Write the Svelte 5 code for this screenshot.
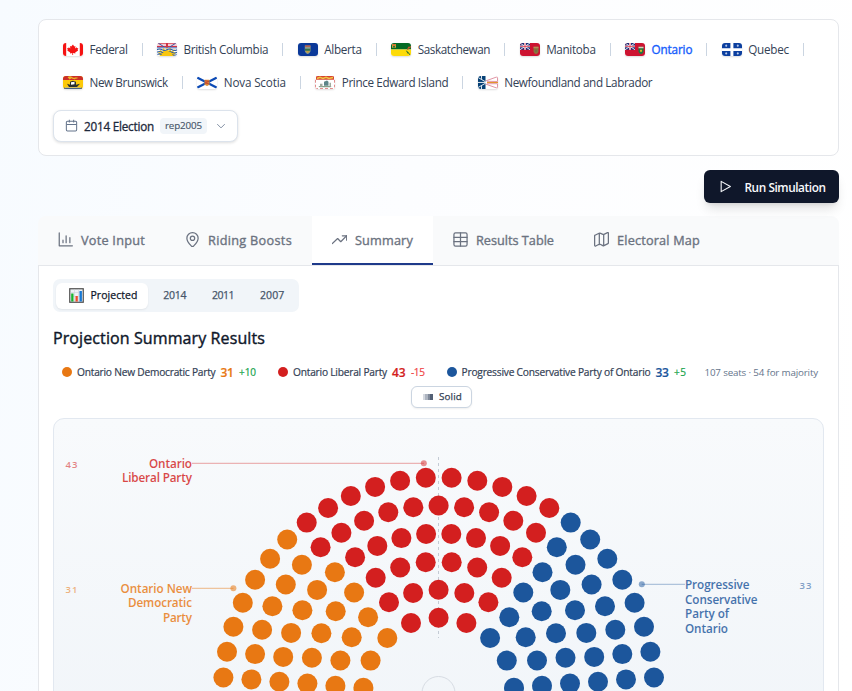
<script>
  // Spreads a label's letters so that it fills its column exactly.
  function fit(node, width) {
    const range = document.createRange();
    range.selectNodeContents(node);
    const natural = range.getBoundingClientRect().width;
    node.style.letterSpacing = `${(width - natural) / node.textContent.length}px`;
    node.style.width = `${width}px`;
  }

  const regions = [
    [
      { id: 'ca', name: 'Federal', w: 38 },
      { id: 'bc', name: 'British Columbia', w: 84.7 },
      { id: 'ab', name: 'Alberta', w: 37.5 },
      { id: 'sk', name: 'Saskatchewan', w: 72.5 },
      { id: 'mb', name: 'Manitoba', w: 49.5 },
      { id: 'on', name: 'Ontario', w: 40.7 },
      { id: 'qc', name: 'Quebec', w: 40.5 }
    ],
    [
      { id: 'nb', name: 'New Brunswick', w: 78.3 },
      { id: 'ns', name: 'Nova Scotia', w: 62 },
      { id: 'pe', name: 'Prince Edward Island', w: 106.5 },
      { id: 'nl', name: 'Newfoundland and Labrador', w: 148 }
    ]
  ];

  const tabs = [
    { id: 'vote', name: 'Vote Input', w: 64 },
    { id: 'boost', name: 'Riding Boosts', w: 84 },
    { id: 'summary', name: 'Summary', w: 58 },
    { id: 'table', name: 'Results Table', w: 78 },
    { id: 'map', name: 'Electoral Map', w: 83 }
  ];

  const parties = [
    { name: 'Ontario New Democratic Party', w: 138.5, seats: 31, sw: 13, delta: '+10', dw: 17, color: '#e87813' },
    { name: 'Ontario Liberal Party', w: 94, seats: 43, sw: 13.5, delta: '-15', dw: 13.5, color: '#d31f1f' },
    { name: 'Progressive Conservative Party of Ontario', w: 189, seats: 33, sw: 13, delta: '+5', dw: 12.5, color: '#1c569c' }
  ];

  // Left half of each arc from the axis outwards: [distance from the axis, y].
  const rows = [
    { mid: null, red: [6, 5], pts: [[12.8,477.8],[38.5,480.8],[63.5,486.9],[87.8,496],[110.5,508],[131.9,522.6],[151.4,539.5],[168.5,558.8],[183.5,579.8],[195.8,602.8],[205.2,626.8],[211.6,651.8],[215.2,677.5]] },
    { mid: 505.5, red: [5, 4], pts: [[25.3,507.2],[50.3,512.3],[74.5,520.8],[97.2,532.8],[118,547.3],[136.7,564.8],[152.8,584.5],[166.2,606.2],[176.5,629.7],[183.5,654.1],[187.2,679.4]] },
    { mid: null, red: [4, 4], pts: [[12.5,534],[37.2,538.1],[61.3,545.9],[83.5,557.2],[103.7,572.2],[121.5,589.9],[136.2,610.3],[147.5,632.9],[155.4,656.9],[159.2,681.7]] },
    { mid: null, red: [3, 3], pts: [[12.9,562.3],[38.4,567.5],[62.9,577.8],[84.5,592.5],[102.9,611.3],[117.2,633.2],[126.7,657.8],[131.2,683.6]] },
    { mid: 589.7, red: [2, 2], pts: [[25.5,593],[49.6,602.3],[70.5,617.3],[86.9,637.2],[98.2,660.5],[103.2,685.7]] },
    { mid: 617.8, red: [1, 1], pts: [[27.6,623],[51.3,638],[68,660.6],[75.2,687.8]] }
  ];
  const AXIS = 438.6;
  const RED = '#d31f1f', ORANGE = '#e87813', BLUE = '#1c569c';
  const seats = rows.flatMap((r) => [
    ...(r.mid ? [{ x: AXIS, y: r.mid, c: RED }] : []),
    ...r.pts.flatMap(([d, y], i) => [
      { x: AXIS - d, y, c: i < r.red[0] ? RED : ORANGE },
      { x: AXIS + d + 0.2, y, c: i < r.red[1] ? RED : BLUE }
    ])
  ]);

  const labels = [
    { c: RED, anchor: 'end', x: 192, y: 468, step: 14.3, lines: [['Ontario', 43], ['Liberal Party', 70]], num: 43, nx: 65.5, ny: 468 },
    { c: ORANGE, anchor: 'end', x: 192, y: 593, step: 14.4, lines: [['Ontario New', 71.5], ['Democratic', 64], ['Party', 29]], num: 31, nx: 65.5, ny: 593 },
    { c: BLUE, anchor: 'start', x: 685, y: 589, step: 14.6, lines: [['Progressive', 64.5], ['Conservative', 72.5], ['Party of', 44], ['Ontario', 43]], num: 33, nx: 799.5, ny: 589 }
  ];
</script>

{#snippet jack()}
  <path fill="#1b2f78" d="M0 0h10v7H0z" />
  <path d="M0 0l10 7M10 0L0 7" stroke="#e6e8f2" stroke-width="1" />
  <path d="M5 0v7M0 3.5h10" stroke="#fff" stroke-width="2" />
  <path d="M5 0v7M0 3.5h10" stroke="#d5213a" stroke-width=".8" />
{/snippet}

{#snippet flag(id)}
  <svg class="flag" viewBox="0 0 20 13.5" preserveAspectRatio="none" fill="none">
    {#if id === 'ca'}
      <path fill="#fff" d="M0 0h20v13.5H0z" />
      <path fill="#f51212" d="M0 0h3.2v13.5H0zM16.8 0H20v13.500h-3.200zM10 1.6l1.2 2 1.2-.5-.3 2.600 1.500-1.200.5 1 1.200-.2-.7 2 .6.500-3 2 .2 1-2.300-.3v2h-.8v-2l-2.300.3.2-1-3-2 .6-.5-.7-2 1.200.2.500-1 1.500 1.200-.3-2.600 1.200.5z" />
    {:else if id === 'bc'}
      <path fill="#fff" d="M0 0h20v13.5H0z" />
      <path fill="#cf3347" d="M0 .2h20v1.1H0zM0 2.8h20v1.3H0zM9 0h2v5H9z" />
      <path stroke="#3955a5" stroke-width="1" d="M1 0l6 4M19 0l-6 4M0 5h20" />
      <path fill="#fbc914" d="M3 13.5L1 9l3 1-2-4 4 3 0-4 3 3 1-4 1 4 3-3v4l4-3-2 4 3-1-2 4.5z" />
      <path stroke="#305fa8" stroke-width="1.2" d="M0 7q2.5-1.5 5 0t5 0 5 0 5 0M0 9.6q2.5-1.5 5 0t5 0 5 0 5 0M0 12q2.5-1.5 5 0t5 0 5 0 5 0" />
      <path fill="#f9c60d" d="M5 11q5-6 10 0l1 2.5H4z" />
    {:else if id === 'ab'}
      <path fill="#0b3999" d="M0 0h20v13.5H0z" />
      <path fill="#8b9a90" d="M6.8 2.5h5.8v5q0 3-2.9 3.8-2.900-.8-2.900-3.800z" />
      <path fill="#c4543c" d="M7 2.500h5.400v1.400H7z" />
      <path fill="#377344" d="M7 6h5.400v2H7z" /><path fill="#d1a12c" d="M7.400 8.500h4.600l-2.300 2z" />
    {:else if id === 'sk'}
      <path fill="#046a25" d="M0 0h20v6.8H0z" /><path fill="#fddb08" d="M0 6.8h20v6.7H0z" />
      <path fill="#d7a336" d="M1 1h4v4H1z" /><path fill="#cf5633" d="M1.5 1.3h3v1.2h-3z" /><path fill="#29773c" d="M2 3h2v1.8H2z" />
      <path stroke="#2f7333" d="M19.5 13l-3-4M17 11l-1.5-3" /><path stroke="#c8562b" stroke-width="1.2" d="M16.500 7l1.500-3M18.500 5.500L19.500 3.500" />
    {:else if id === 'mb' || id === 'on'}
      <path fill="#cd1331" d="M0 0h20v13.5H0z" />
      {@render jack()}
      <path fill={id === 'mb' ? '#8d713e' : '#1e793f'} d="M13.5 4h5v4.5q0 2.6-2.5 3.3-2.5-.7-2.5-3.3z" />
      <path fill={id === 'mb' ? '#bb8a58' : '#e3c9bd'} d="M13.5 4h5v1.500h-5z" />
      <path fill={id === 'mb' ? '#6f7143' : '#d6b526'} d="M15 7h2v2h-2z" />
    {:else if id === 'qc'}
      <path fill="#0c3f9f" d="M0 0h20v13.5H0z" />
      <path fill="#fff" d="M8.4 0h3v13.5h-3zM0 5.4h20v2.8H0z" />
      {#each [[4.2, 2.8], [15.8, 2.8], [4.2, 10.8], [15.8, 10.8]] as [x, y]}
        <path stroke="#d5e0f5" stroke-width=".8" d="M{x} {y - 1.3}v2.600M{x - 1} {y}h2" />
      {/each}
    {:else if id === 'nb'}
      <path fill="#fcc908" d="M0 0h20v13.5H0z" /><path fill="#cb2e29" d="M0 0h20v4.2H0z" />
      <path stroke="#edb425" stroke-width="1.3" d="M5 1.8q2-1.5 4 0t5.5 0M6 3l2-1M11 3l2-1" />
      <path fill="#2a3030" d="M4 8l3 1V6l3-1 3 1v3l4-1-3 3.300H6z" /><path fill="#fff" d="M8 6.500l3.500-.5v2.600l-3.500.6z" />
      <path fill="#25456f" d="M1 12.300h18v1.200H1z" /><path stroke="#eee" stroke-width=".5" d="M2 12.300h16" />
    {:else if id === 'ns'}
      <path fill="#fff" d="M0 0h20v13.5H0z" /><path stroke="#0c4ab5" stroke-width="2.4" d="M0 1.5l20 10.7M20 1.5L0 12.2" />
      <path fill="#d98c3a" d="M7.500 3.800h5v4.800q-2.500 3.400-5 0z" /><path stroke="#c7442e" stroke-width="1" d="M8 5l4 .6-4 1.600 4 1" />
    {:else if id === 'pe'}
      <path fill="#fff" d="M0 0h20v13.5H0z" /><path fill="#d7442f" d="M1 0h18v3.800H1z" />
      <path stroke="#f0c644" stroke-width="1.6" d="M2 2.600l3-1.300 3 1.300 3-1.300 3 1.300 4-1" />
      <path fill="#86a08a" d="M3.500 10.300h13l-1 1.500h-11z" /><path fill="#5d8588" d="M9 6l3-1.300 1.500 1.300v4H9z" /><path fill="#a2ab9f" d="M5 8h2.500v3H5zM14.500 7h1.500v4h-1.500z" />
      <path stroke="#e08a8a" stroke-dasharray="3 2" d="M0 13h20M.5 4v9M19.500 4v9" />
    {:else if id === 'nl'}
      <path fill="#fff" d="M0 0h20v13.5H0z" /><path fill="#074176" d="M0 0h7.500v13.500H0z" />
      <path stroke="#fff" stroke-width=".9" d="M0 6.700h8M3.500 0v3M3.500 10.500v3M0 1.500l7.500 4.500M0 12l7.500-4.500" />
      <path stroke="#d8778a" stroke-width=".8" d="M8 5L19.500.7v5L9 5.500M8 8.500l11.500 4.300V8L9 8" /><path stroke="#e2962c" stroke-width="1.1" d="M9 6.700h11" />
    {/if}
  </svg>
{/snippet}

{#snippet icon(id)}
  <svg class="tab-icon" viewBox="0 0 24 24">
    {#if id === 'vote'}
      <path d="M2 1.5V22h21M8 17v-4M13 17V6M19 17V9" />
    {:else if id === 'boost'}
      <path d="M21 10c0 6-5.400 10.400-7.700 12.800a1.800 1.800 0 0 1-2.600 0C8.400 20.400 3 16 3 10a9 9 0 0 1 18 0z" /><circle cx="12" cy="10" r="3.500" />
    {:else if id === 'summary'}
      <path d="M16.500 6h7v7" /><path d="M23.500 6l-9.500 9.500-5-5L.5 18.500" />
    {:else if id === 'table'}
      <rect x="1.500" y="1.500" width="21" height="21" rx="2.500" /><path d="M12 1.500v21M1.500 8.500h21M1.500 15.500h21" />
    {:else}
      <path d="M14.100 3.700a2 2 0 0 0 1.800 0l4.900-2.300A1.200 1.200 0 0 1 23 2.300v15.400a1 1 0 0 1-.6.9l-6.500 3.200a2 2 0 0 1-1.800 0l-4.200-2.100a2 2 0 0 0-1.800 0l-5.300 2.600A1.200 1.200 0 0 1 1 21.300V6a1 1 0 0 1 .6-.9l6.500-3.200a2 2 0 0 1 1.800 0zM15.500 4v18M8.500 2v18" />
    {/if}
  </svg>
{/snippet}

<main>
  <section class="card">
    {#each regions as row, ri}
      <nav>
        {#each row as r, i}
          <a class:active={r.id === 'on'} href="#{r.id}">{@render flag(r.id)}<span use:fit={r.w}>{r.name}</span></a>
          {#if ri === 0 || i < row.length - 1}<i class="sep"></i>{/if}
        {/each}
      </nav>
    {/each}
    <button class="election">
      <svg class="cal" viewBox="0 0 24 24"><rect x="2.500" y="4" width="19" height="18" rx="2" /><path d="M8 1.500v5M16 1.500v5M3 10h18" /></svg>
      <span class="year" use:fit={70}>2014 Election</span>
      <span class="tag"><span use:fit={37}>rep2005</span></span>
      <svg class="chev" viewBox="0 0 24 24"><path d="M3 7.500l9 9 9-9" /></svg>
    </button>
  </section>

  <div class="actions">
    <button class="run">
      <svg viewBox="0 0 24 24"><path d="M4 2.500v19L21 12z" /></svg>
      <span use:fit={81}>Run Simulation</span>
    </button>
  </div>

  <div class="tabs">
    {#each tabs as t}
      <button class:current={t.id === 'summary'}>{@render icon(t.id)}<span use:fit={t.w}>{t.name}</span></button>
    {/each}
  </div>

  <section class="panel">
    <div class="segments">
      <button class="on">
        <svg viewBox="0 0 15 15"><rect x=".75" y=".75" width="13.500" height="13.500" fill="#edf1f5" stroke="#4d4d4d" stroke-width="1.200" /><path d="M5.500 1.500v12M9.500 1.500v12M1.500 4.500h12M1.500 8.500h12" stroke="#cbd2d8" stroke-width=".6" /><path fill="#16b52c" d="M2.200 5.500h2.300v8H2.200z" /><path fill="#ed4b2b" d="M6.500 8h2.300v5.500H6.500z" /><path fill="#1677d3" d="M10.500 3h2.400v10.500h-2.400z" /></svg>
        <span use:fit={47}>Projected</span>
      </button>
      {#each [['2014', 23], ['2011', 22], ['2007', 24.5]] as [y, w]}
        <button><span use:fit={w}>{y}</span></button>
      {/each}
    </div>

    <h2><span use:fit={212}>Projection Summary Results</span></h2>

    <div class="legend">
      {#each parties as p}
        <div class="party">
          <i class="dot" style:background={p.color}></i>
          <span use:fit={p.w}>{p.name}</span>
          <b style:color={p.color} use:fit={p.sw}>{p.seats}</b>
          <em class:down={p.delta[0] === '-'} use:fit={p.dw}>{p.delta}</em>
        </div>
      {/each}
      <span class="total" use:fit={113.5}>107 seats · 54 for majority</span>
    </div>

    <button class="solid">
      <i class="bars"></i><span use:fit={23}>Solid</span>
    </button>

    <div class="chart">
      <svg viewBox="54 419 769 272" width="769" height="272">
        <path d="M438.500 457v181" stroke="#c4cbd5" stroke-dasharray="3 3" />
        <circle cx="438.500" cy="693" r="16.500" fill="none" stroke="#d7dce3" />
        {#each seats as s}<circle cx={s.x} cy={s.y} r="10" fill={s.c} />{/each}
        <path d="M192 463.300H424" stroke={RED} opacity=".4" />
        <path d="M192 588.300H233.500" stroke={ORANGE} opacity=".5" />
        <path d="M641.700 584.300H685" stroke={BLUE} opacity=".4" />
        <circle cx="423.800" cy="463.200" r="3" fill={RED} opacity=".5" />
        <circle cx="233.400" cy="588.300" r="3" fill={ORANGE} opacity=".55" />
        <circle cx="641.800" cy="584.200" r="3" fill={BLUE} opacity=".5" />
        {#each labels as l}
          <g fill={l.c}>
            {#each l.lines as [text, w], i}
              <text class="name" x={l.anchor === 'end' ? l.x - w : l.x} y={l.y + i * l.step} textLength={w}>{text}</text>
            {/each}
            <text class="num" x={l.nx} y={l.ny} textLength="12">{l.num}</text>
          </g>
        {/each}
      </svg>
    </div>
  </section>
</main>

<style>
  :global(body) { margin: 0; overflow: hidden; }
  main {
    box-sizing: border-box; width: 852px; height: 691px; overflow: hidden; padding: 19px 13px 0 38px;
    background: linear-gradient(100deg, #f7fbff 0%, #fcfdff 45%, #fff 100%);
    font-family: "Open Sans", "Noto Sans", sans-serif; color: #334155;
  }
  button { font: inherit; color: inherit; border: 0; background: none; padding: 0; margin: 0; display: flex; align-items: center; box-sizing: border-box; }
  span, b, em { white-space: nowrap; display: block; flex: none; }
  svg { display: block; flex: none; }
  .card { box-sizing: border-box; height: 137px; border: 1px solid #e5e7eb; border-radius: 8px; background: #fff; padding: 13px 14px; }
  nav { display: flex; align-items: center; height: 33px; padding-left: 10px; font-size: 11.700px; }
  nav a { display: flex; align-items: center; gap: 6.500px; color: #334155; text-decoration: none; }
  nav a span { margin-top: -2px; }
  nav a.active { color: #155dfc; -webkit-text-stroke: .35px; }
  .flag { width: 20px; height: 13px; border-radius: 3px; overflow: hidden; margin-top: -1px; box-shadow: 0 1px 2px #0002; }
  .sep { flex: none; width: 1px; height: 13px; background: #cbd5e1; margin: 0 14.300px 0 14.200px; }
  .election { width: 185px; height: 32px; margin-top: 11px; padding: 0 12px 0 11px; border: 1px solid #dce3ec; border-radius: 8px; background: #fff; box-shadow: 0 1px 3px #0002; }
  .cal { width: 13px; height: 13px; margin: -1px 6px 0 0; fill: none; stroke: #64748b; stroke-width: 1.900; }
  .year { font-size: 11.700px; -webkit-text-stroke: .3px; color: #1e293b; }
  .tag { width: 47px; box-sizing: border-box; padding: 0 5px; margin-left: 6px; height: 16px; line-height: 15px; border-radius: 4px; background: #f1f5f9; font-size: 9.800px; color: #475569; -webkit-text-stroke: .15px; }
  .chev { width: 10px; height: 10px; margin-left: 9px; fill: none; stroke: #7d8ba0; stroke-width: 2.300; }
  .actions { display: flex; justify-content: flex-end; margin-top: 14px; }
  .run { width: 135px; height: 33px; padding-left: 15px; gap: 12.500px; border-radius: 6px; background: #0f172a; color: #f8fafc; font-size: 11.800px; font-weight: 600; box-shadow: 0 8px 12px -3px #0002, 0 3px 5px -3px #0002; }
  .run svg { width: 13px; height: 13px; fill: none; stroke: #f8fafc; stroke-width: 2; stroke-linejoin: round; }
  .tabs { display: flex; height: 49px; margin-top: 13px; background: #f9fafb; border-radius: 8px 8px 0 0; }
  .tabs button { padding: 0 20px; gap: 8px; font-size: 12.700px; -webkit-text-stroke: .35px; color: #6b7280; border-bottom: 2px solid transparent; }
  .tabs button.current { background: #fff; border-color: #1e3a8a; }
  .tab-icon { width: 15px; height: 15px; fill: none; stroke: #6b7280; stroke-width: 2; stroke-linecap: round; stroke-linejoin: round; }
  .panel { box-sizing: border-box; height: 430px; border: 1px solid #e5e7eb; background: #fff; padding: 13px 14px 0; }
  .segments { display: flex; align-items: center; box-sizing: border-box; width: 246px; height: 33px; padding: 0 3px; border-radius: 7px; background: #f1f5f9; font-size: 10.500px; color: #475569; -webkit-text-stroke: .25px; }
  .segments button { height: 26px; padding: 0 0 2px 15.300px; margin-right: 10.500px; }
  .segments .on { width: 92px; gap: 6.500px; padding-left: 13px; margin-right: 0; border-radius: 6px; background: #fff; color: #0f172a; box-shadow: 0 1px 2px #0001; }
  .segments svg { width: 15px; height: 15px; fill: none; margin-top: 2px; }
  h2 { margin: 14px 0 0; height: 24px; line-height: 24px; font-size: 16px; font-weight: 400; -webkit-text-stroke: .4px; color: #0f172a; }
  .legend { display: flex; align-items: center; height: 18px; margin-top: 13px; padding-left: 9px; font-size: 10.200px; color: #334155; -webkit-text-stroke: .2px; }
  .party { display: flex; align-items: center; margin-right: 22px; }
  .dot { width: 10px; height: 10px; border-radius: 50%; margin-right: 5px; }
  .party b { margin-left: 5px; font-size: 12px; font-weight: 600; }
  .party em { margin-left: 5.500px; font-style: normal; font-size: 10px; color: #16a34a; }
  .party em.down { color: #ef4444; }
  .total { margin-left: -4px; color: #64748b; font-size: 9.800px; -webkit-text-stroke: 0; }
  .solid { width: 61px; height: 22px; margin: 5px auto 0 358px; padding: 0 0 1px 11px; gap: 6px; border: 1px solid #cbd5e1; border-radius: 6px; background: #fff; box-shadow: 0 1px 2px #0001; font-size: 9.800px; -webkit-text-stroke: .25px; }
  .bars { width: 10px; height: 6px; background: linear-gradient(90deg, #d5d9e0 0 25%, #adb4c0 25% 50%, #7f8999 50% 75%, #536075 75%); }
  .chart { box-sizing: border-box; width: 771px; height: 500px; margin-top: 10px; border: 1px solid #e2e8f0; border-radius: 11px; background: linear-gradient(#f8fafc, #f1f5f9 320px); }
  .name { font-size: 11.700px; font-weight: 600; opacity: .82; }
  .num { font-size: 9.500px; font-weight: 600; opacity: .55; }
</style>
